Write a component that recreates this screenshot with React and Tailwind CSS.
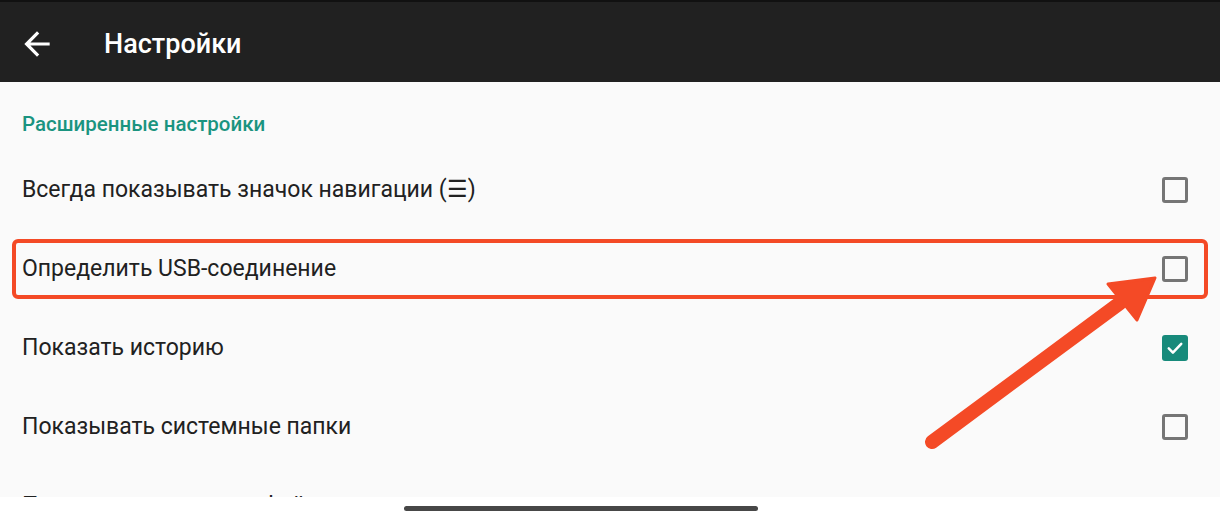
import React from "react";

function Checkbox({ checked }) {
  if (checked) {
    return (
      <div className="w-[26px] h-[26px] rounded-[3px] bg-[#178a7b] flex items-center justify-center">
        <svg width="20" height="20" viewBox="0 0 24 24" fill="none">
          <path d="M4.5 12.5l5 5L19.5 7" stroke="#ffffff" strokeWidth="3" strokeLinecap="round" strokeLinejoin="round" />
        </svg>
      </div>
    );
  }
  return <div className="w-[26px] h-[26px] rounded-[3px] border-[3px] border-[#757575]" />;
}

function Row({ label, checked, highlight }) {
  return (
    <div className="h-[79px] px-[12px] flex items-center">
      <div
        className={
          "flex-1 h-[60px] flex items-center pl-[6px] pr-[16px] rounded-[6px] border-[4px] " +
          (highlight ? "border-[#f44a26]" : "border-transparent")
        }
      >
        <span className="flex-1 text-[23px] leading-[26px] text-[#212121]">{label}</span>
        {checked !== undefined && <Checkbox checked={checked} />}
      </div>
    </div>
  );
}

export default function App() {
  return (
    <div className="relative w-[1220px] h-[520px] flex flex-col overflow-hidden bg-[#fafafa] font-['Roboto',sans-serif]">
      <header className="h-[82px] shrink-0 bg-[#212121] border-t-2 border-[#111111] flex items-center pt-1">
        <div className="w-[104px] flex items-center pl-[18px]">
          <svg width="38" height="38" viewBox="0 0 24 24" fill="#ffffff">
            <path d="M20 11H7.83l5.59-5.59L12 4l-8 8 8 8 1.41-1.41L7.83 13H20v-2z" />
          </svg>
        </div>
        <h1 className="text-[27px] leading-[28px] font-medium text-white">Настройки</h1>
      </header>

      <main className="flex-1 overflow-hidden">
        <div className="pt-[30px] pb-[14px] px-[22px]">
          <div className="text-[20.5px] leading-[24px] font-medium text-[#1a9480]">Расширенные настройки</div>
        </div>
        <Row label="Всегда показывать значок навигации (☰)" checked={false} />
        <Row label="Определить USB-соединение" checked={false} highlight />
        <Row label="Показать историю" checked={true} />
        <Row label="Показывать системные папки" checked={false} />
        <Row label="Показывать скрытые файлы" />
      </main>

      <footer className="h-[23px] shrink-0 bg-white flex items-center pl-[404px]">
        <div className="w-[354px] h-[5px] rounded-full bg-[#474747]" />
      </footer>

      <svg className="absolute left-0 top-0 pointer-events-none" width="1220" height="520" viewBox="0 0 1220 520">
        <line x1="932" y1="442" x2="1120" y2="303" stroke="#f44a26" strokeWidth="14" strokeLinecap="round" />
        <polygon points="1155,278 1108,284 1137,320" fill="#f44a26" stroke="#f44a26" strokeWidth="3" strokeLinejoin="round" />
      </svg>
    </div>
  );
}
